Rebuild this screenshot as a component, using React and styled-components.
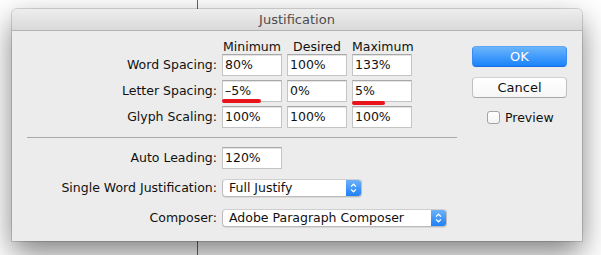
import React from 'react';
import styled, { createGlobalStyle } from 'styled-components';

const GlobalStyle = createGlobalStyle`
  html, body {
    margin: 0;
    padding: 0;
    background: #ffffff;
  }
  body {
    font-family: "DejaVu Sans", "Liberation Sans", sans-serif;
  }
`;

const Page = styled.div`
  width: 601px;
  height: 255px;
  box-sizing: border-box;
  padding: 9px 19px 0 12px;
  overflow: hidden;
  background:
    linear-gradient(to right, transparent 197px, #2f6bd6 197px, #2f6bd6 198px, transparent 198px),
    #ffffff;
`;

const Window = styled.div`
  width: 570px;
  height: 232px;
  display: flex;
  flex-direction: column;
  background: #ececec;
  border-radius: 5px 5px 0 0;
  box-shadow: 0 12px 30px rgba(0, 0, 0, 0.5), 0 0 0 1px rgba(0, 0, 0, 0.14);
  font-size: 12.5px;
  color: #111111;
`;

const TitleBar = styled.div`
  height: 21px;
  flex-shrink: 0;
  display: flex;
  align-items: center;
  justify-content: center;
  border-bottom: 1px solid #b4b4b4;
  border-radius: 5px 5px 0 0;
  background: linear-gradient(#eeeeee, #d9d9d9);
  font-size: 13px;
  color: #4d4d4d;
`;

const Body = styled.div`
  display: flex;
  gap: 15px;
  padding: 5px 15px 0 0;
`;

const LeftColumn = styled.div`
  width: 445px;
  display: flex;
  flex-direction: column;
`;

const TableGrid = styled.div`
  display: grid;
  grid-template-columns: 205px repeat(3, 60px);
  column-gap: 5px;
  row-gap: 4px;
`;

const HeaderGrid = styled(TableGrid)`
  height: 18px;
  align-items: end;
`;

const ColumnHead = styled.div`
  text-align: center;
  line-height: 14px;
`;

const Label = styled.div`
  text-align: right;
  line-height: 22px;
  white-space: nowrap;
`;

const Field = styled.div`
  position: relative;
  width: ${(p) => p.$width || 60}px;
  height: 22px;
  box-sizing: border-box;
  padding-left: 2px;
  line-height: 20px;
  background: #ffffff;
  border: 1px solid #c4c4c4;
  border-top-color: #a8a8a8;
  box-shadow: inset 0 1px 0 #e4e4e4;
`;

const RedMark = styled.span`
  position: absolute;
  left: ${(p) => p.$left}px;
  top: ${(p) => p.$top}px;
  width: ${(p) => p.$width}px;
  height: 4px;
  border-radius: 2px;
  background: #e8151c;
`;

const Separator = styled.div`
  height: 1px;
  margin: 9px 0 9px 15px;
  background: #a9a9a9;
`;

const FormRows = styled.div`
  display: flex;
  flex-direction: column;
  gap: 8px;
`;

const FormRow = styled.div`
  display: grid;
  grid-template-columns: 205px auto;
  column-gap: 5px;
  align-items: center;
  justify-content: start;
  height: 22px;
`;

const Popup = styled.div`
  display: flex;
  width: ${(p) => p.$width}px;
  height: 18px;
  box-sizing: border-box;
  background: #ffffff;
  border: 1px solid #bcbcbc;
  border-top-color: #cfcfcf;
  border-radius: 4px;
  overflow: hidden;
  box-shadow: 0 1px 0 rgba(0, 0, 0, 0.08);
`;

const PopupText = styled.div`
  flex: 1;
  padding-left: 6px;
  line-height: 16px;
  white-space: nowrap;
`;

const Stepper = styled.div`
  width: 15px;
  display: flex;
  align-items: center;
  justify-content: center;
  background: linear-gradient(#6cb2fa, #1f80f6);
`;

const RightColumn = styled.div`
  width: 95px;
  display: flex;
  flex-direction: column;
  padding-top: 10px;
`;

const Button = styled.div`
  height: 21px;
  box-sizing: border-box;
  display: flex;
  align-items: center;
  justify-content: center;
  border-radius: 4px;
  font-size: 13px;
  margin-bottom: ${(p) => p.$gapAfter || 0}px;
  color: ${(p) => (p.$primary ? '#ffffff' : '#111111')};
  background: ${(p) => (p.$primary ? 'linear-gradient(#6cb5fb, #1a83fb)' : 'linear-gradient(#ffffff, #f7f7f7)')};
  border: 1px solid ${(p) => (p.$primary ? '#3a8cf2' : '#c0c0c0')};
  border-top-color: ${(p) => (p.$primary ? '#5ea6f8' : '#d0d0d0')};
  border-bottom-color: ${(p) => (p.$primary ? '#1c6fe0' : '#a9a9a9')};
`;

const CheckRow = styled.label`
  display: flex;
  align-items: center;
  gap: 5px;
  padding-left: 15px;
  margin-top: 12px;
  height: 14px;
`;

const CheckBox = styled.span`
  width: 13px;
  height: 13px;
  box-sizing: border-box;
  border: 1px solid #a3a3a3;
  border-radius: 3px;
  background: linear-gradient(#ffffff, #f4f4f4);
`;

const StepperIcon = () => (
  <svg width="7" height="10" viewBox="0 0 7 10">
    <path d="M1 3.6 L3.5 1.2 L6 3.6 M1 6.4 L3.5 8.8 L6 6.4" fill="none" stroke="#ffffff" strokeWidth="1.3" />
  </svg>
);

const rows = [
  { label: 'Word Spacing:', values: ['80%', '100%', '133%'] },
  { label: 'Letter Spacing:', values: ['–5%', '0%', '5%'], marks: [{ col: 0, left: -1, top: 18, width: 39 }, { col: 2, left: -1, top: 20, width: 33 }] },
  { label: 'Glyph Scaling:', values: ['100%', '100%', '100%'] },
];

export default function App() {
  return (
    <>
      <GlobalStyle />
      <Page>
        <Window>
          <TitleBar>Justification</TitleBar>
          <Body>
            <LeftColumn>
              <HeaderGrid>
                <span />
                <ColumnHead>Minimum</ColumnHead>
                <ColumnHead>Desired</ColumnHead>
                <ColumnHead>Maximum</ColumnHead>
              </HeaderGrid>
              <TableGrid>
                {rows.map((row) => (
                  <React.Fragment key={row.label}>
                    <Label>{row.label}</Label>
                    {row.values.map((v, i) => {
                      const mark = row.marks && row.marks.find((m) => m.col === i);
                      return (
                        <Field key={i}>
                          {v}
                          {mark && <RedMark $left={mark.left} $top={mark.top} $width={mark.width} />}
                        </Field>
                      );
                    })}
                  </React.Fragment>
                ))}
              </TableGrid>
              <Separator />
              <FormRows>
                <FormRow>
                  <Label>Auto Leading:</Label>
                  <Field>120%</Field>
                </FormRow>
                <FormRow>
                  <Label>Single Word Justification:</Label>
                  <Popup $width={140}>
                    <PopupText>Full Justify</PopupText>
                    <Stepper><StepperIcon /></Stepper>
                  </Popup>
                </FormRow>
                <FormRow>
                  <Label>Composer:</Label>
                  <Popup $width={225}>
                    <PopupText>Adobe Paragraph Composer</PopupText>
                    <Stepper><StepperIcon /></Stepper>
                  </Popup>
                </FormRow>
              </FormRows>
            </LeftColumn>
            <RightColumn>
              <Button $primary $gapAfter={10}>OK</Button>
              <Button>Cancel</Button>
              <CheckRow>
                <CheckBox />
                Preview
              </CheckRow>
            </RightColumn>
          </Body>
        </Window>
      </Page>
    </>
  );
}
